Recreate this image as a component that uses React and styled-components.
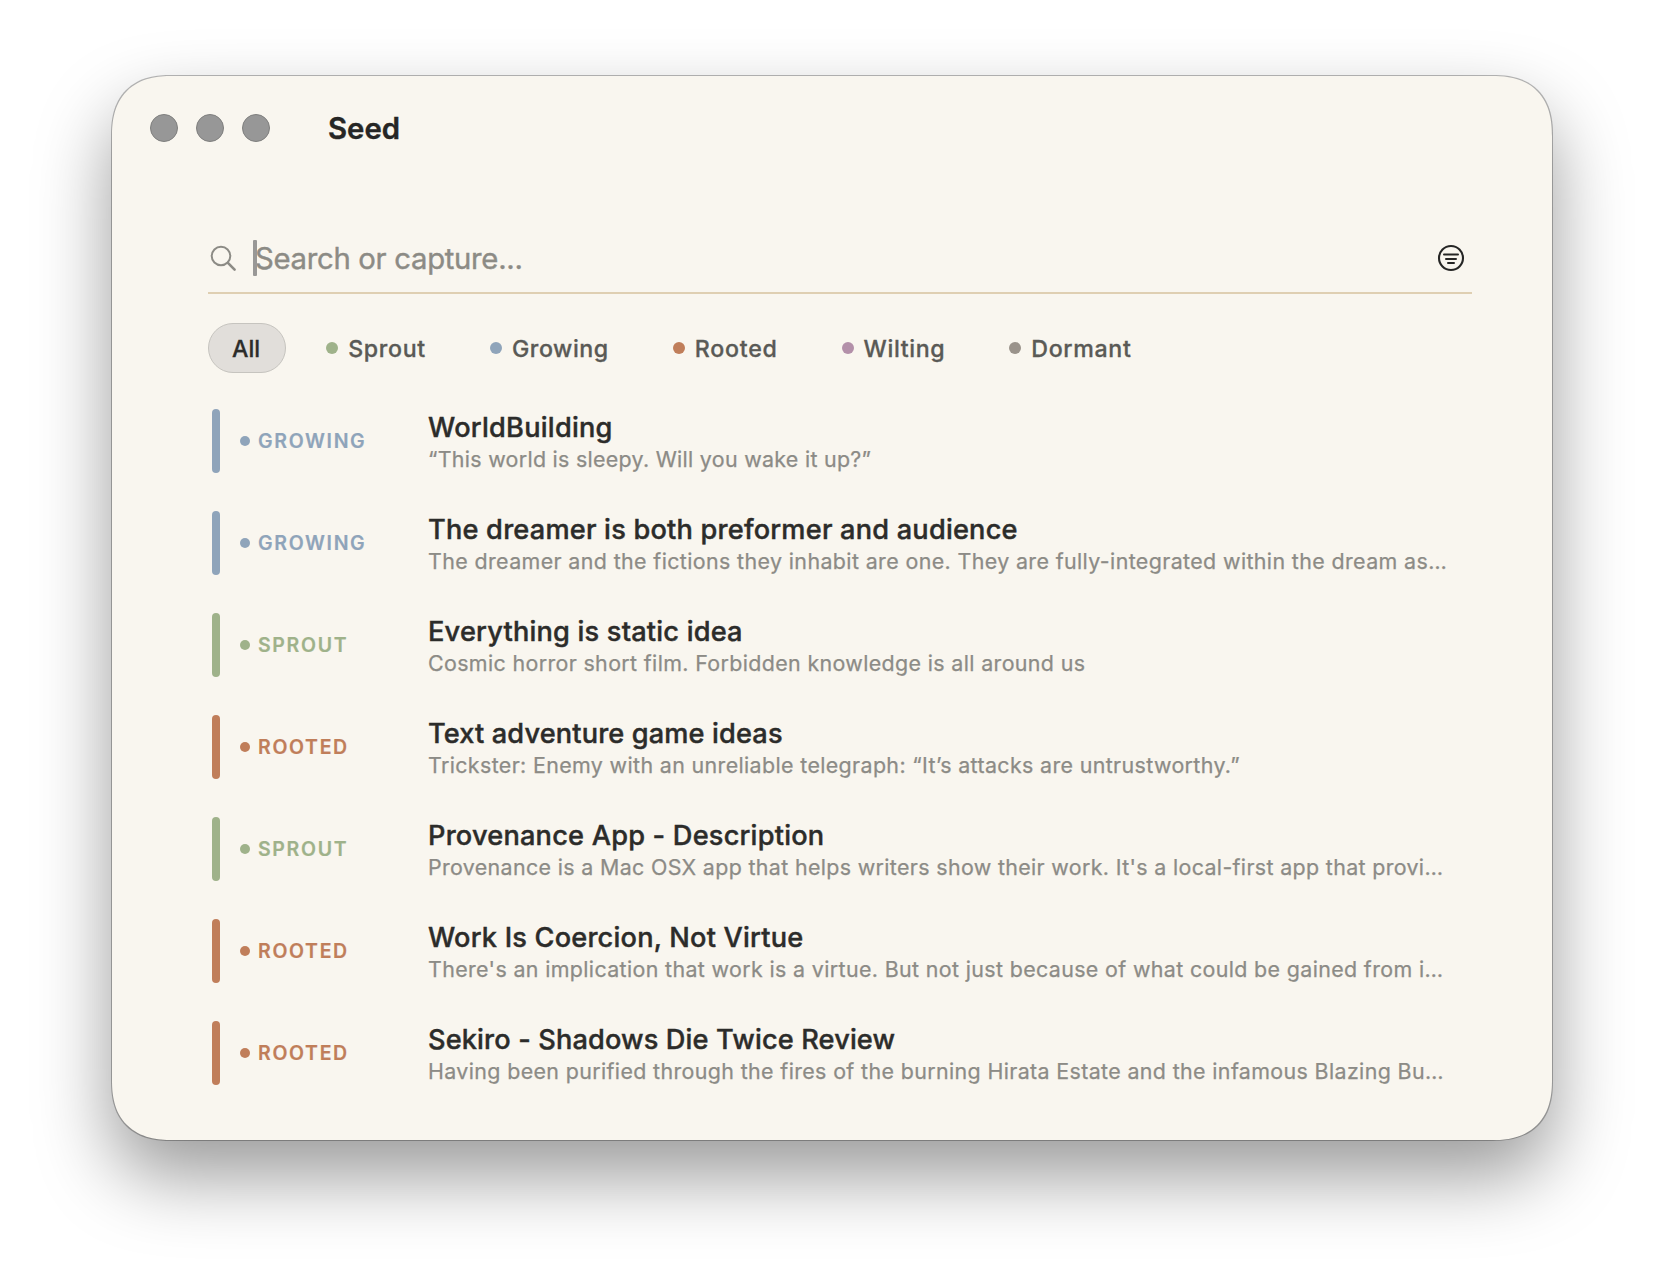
import React from "react";
import styled, { createGlobalStyle } from "styled-components";

const GlobalStyle = createGlobalStyle`
  * { box-sizing: border-box; }
  body {
    margin: 0;
    background: #ffffff;
    font-family: Inter, "Liberation Sans", sans-serif;
    -webkit-font-smoothing: antialiased;
  }
`;

const palette = {
  sprout: "#9fb28a",
  growing: "#8fa4ba",
  rooted: "#c07e5a",
  wilting: "#b390a9",
  dormant: "#9a938b",
};

const Desktop = styled.div`
  width: 1664px;
  height: 1288px;
  padding: 76px 112px;
  overflow: hidden;
`;

const Window = styled.main`
  width: 1440px;
  height: 1064px;
  display: flex;
  flex-direction: column;
  background: #f9f6ef;
  border-radius: 60px;
  corner-shape: superellipse(1.27);
  box-shadow: 0 0 0 1px rgba(0, 0, 0, 0.27), 0 36px 76px rgba(0, 0, 0, 0.4);
`;

const TitleBar = styled.header`
  height: 104px;
  padding-left: 38px;
  display: flex;
  align-items: center;
`;

const Lights = styled.div`
  display: flex;
  gap: 18px;
  margin-right: 58px;
`;

const Light = styled.span`
  width: 28px;
  height: 28px;
  border-radius: 50%;
  background: #979797;
  border: 1px solid #7f7f7e;
`;

const AppTitle = styled.h1`
  margin: 0;
  padding-top: 2px;
  font-size: 29.3px;
  font-weight: 600;
  line-height: 36px;
  -webkit-text-stroke: 0.4px currentColor;
  color: #262625;
`;

const Content = styled.div`
  display: flex;
  flex-direction: column;
  padding: 44px 80px 0 96px;
`;

const SearchRow = styled.div`
  height: 70px;
  display: flex;
  align-items: center;
  border-bottom: 2px solid #dfcfb2;
  padding: 0 7px 0 2px;
`;

const SearchField = styled.div`
  position: relative;
  flex: 1;
  margin-left: 17px;
  padding-top: 1px;
  font-size: 29.3px;
  line-height: 36px;
  letter-spacing: -0.3px;
  -webkit-text-stroke: 0.4px currentColor;
  color: #8c8b85;
`;

const Caret = styled.span`
  position: absolute;
  left: -2px;
  top: 0;
  width: 4px;
  height: 36px;
  border-radius: 1px;
  background: #999896;
`;

const Filters = styled.nav`
  display: flex;
  gap: 16px;
  margin-top: 29px;
`;

const Chip = styled.button`
  height: 50px;
  display: flex;
  align-items: center;
  gap: 10px;
  padding: 2px ${(p) => (p.$active ? "25px 0 23px" : "23px 0")};
  border: 1px solid ${(p) => (p.$active ? "#c6c4bf" : "transparent")};
  border-radius: 25px;
  background: ${(p) => (p.$active ? "#e1deda" : "transparent")};
  color: ${(p) => (p.$active ? "#2c2c2a" : "#5a5a56")};
  font: 500 23.2px/30px Inter, "Liberation Sans", sans-serif;
  letter-spacing: ${(p) => p.$tracking}px;
  -webkit-text-stroke: 0.3px currentColor;
`;

const Dot = styled.span`
  flex: none;
  width: ${(p) => p.$size}px;
  height: ${(p) => p.$size}px;
  margin-top: ${(p) => p.$lift || 0}px;
  border-radius: 50%;
  background: ${(p) => p.$color};
`;

const List = styled.ul`
  list-style: none;
  margin: 17px 0 0;
  padding: 0;
`;

const Row = styled.li`
  height: 102px;
  display: grid;
  grid-template-columns: 8px 208px 1fr;
  align-items: center;
  padding-left: 4px;
`;

const Bar = styled.span`
  height: 64px;
  border-radius: 4px;
  background: ${(p) => p.$color};
`;

const Stage = styled.span`
  display: flex;
  align-items: center;
  gap: 8px;
  padding-left: 20px;
  font-size: 19.5px;
  font-weight: 600;
  line-height: 24px;
  letter-spacing: 1.67px;
  text-transform: uppercase;
  -webkit-text-stroke: 0.2px currentColor;
  color: ${(p) => p.$color};
`;

const Note = styled.div`
  align-self: start;
  padding-top: 21px;
  white-space: nowrap;
`;

const NoteTitle = styled.div`
  font-size: 27.2px;
  font-weight: 500;
  line-height: 34px;
  letter-spacing: ${(p) => p.$tracking}px;
  -webkit-text-stroke: 0.4px currentColor;
  color: #2c2c2a;
`;

const NotePreview = styled.div`
  font-size: 21.4px;
  line-height: 28px;
  letter-spacing: ${(p) => p.$tracking}px;
  -webkit-text-stroke: 0.25px currentColor;
  color: #8c8b86;
`;

const filters = [
  { key: "sprout", label: "Sprout", tracking: 0.68 },
  { key: "growing", label: "Growing", tracking: 0.58 },
  { key: "rooted", label: "Rooted", tracking: 0.74 },
  { key: "wilting", label: "Wilting", tracking: 0.62 },
  { key: "dormant", label: "Dormant", tracking: 0.66 },
];

const notes = [
  { stage: "growing", title: "WorldBuilding", t: 0.23, preview: "“This world is sleepy. Will you wake it up?”", p: 0.3 },
  { stage: "growing", title: "The dreamer is both preformer and audience", t: 0.2, preview: "The dreamer and the fictions they inhabit are one. They are fully-integrated within the dream as…", p: 0.388 },
  { stage: "sprout", title: "Everything is static idea", t: 0.19, preview: "Cosmic horror short film. Forbidden knowledge is all around us", p: 0.365 },
  { stage: "rooted", title: "Text adventure game ideas", t: 0.13, preview: "Trickster: Enemy with an unreliable telegraph: “It’s attacks are untrustworthy.”", p: 0.369 },
  { stage: "sprout", title: "Provenance App - Description", t: 0.2, preview: "Provenance is a Mac OSX app that helps writers show their work. It's a local-first app that provi…", p: 0.352 },
  { stage: "rooted", title: "Work Is Coercion, Not Virtue", t: 0.19, preview: "There's an implication that work is a virtue. But not just because of what could be gained from i…", p: 0.366 },
  { stage: "rooted", title: "Sekiro - Shadows Die Twice Review", t: 0.13, preview: "Having been purified through the fires of the burning Hirata Estate and the infamous Blazing Bu…", p: 0.374 },
];

const SearchIcon = () => (
  <svg width="28" height="28" viewBox="0 0 28 28" fill="none" stroke="#8c8b85" strokeLinecap="round">
    <circle cx="11" cy="12" r="9.3" strokeWidth="2" />
    <path d="M17.9 18.9 24.6 25.6" strokeWidth="2.6" />
  </svg>
);

const FilterIcon = () => (
  <svg width="28" height="28" viewBox="0 0 28 28" fill="none" stroke="#262625" strokeWidth="2" strokeLinecap="round">
    <circle cx="14" cy="14" r="12" strokeWidth="2.1" />
    <path d="M7 10.6h14M9 14.9h10M11 19h6" />
  </svg>
);

export default function App() {
  return (
    <>
      <GlobalStyle />
      <Desktop>
        <Window>
          <TitleBar>
            <Lights>
              <Light />
              <Light />
              <Light />
            </Lights>
            <AppTitle>Seed</AppTitle>
          </TitleBar>
          <Content>
            <SearchRow>
              <SearchIcon />
              <SearchField>
                <Caret />
                Search or capture...
              </SearchField>
              <FilterIcon />
            </SearchRow>
            <Filters>
              <Chip $active $tracking={0}>All</Chip>
              {filters.map((f) => (
                <Chip key={f.key} $tracking={f.tracking}>
                  <Dot $size={12} $lift={-2} $color={palette[f.key]} />
                  {f.label}
                </Chip>
              ))}
            </Filters>
            <List>
              {notes.map((n) => (
                <Row key={n.title}>
                  <Bar $color={palette[n.stage]} />
                  <Stage $color={palette[n.stage]}>
                    <Dot $size={10} $color={palette[n.stage]} />
                    {n.stage}
                  </Stage>
                  <Note>
                    <NoteTitle $tracking={n.t}>{n.title}</NoteTitle>
                    <NotePreview $tracking={n.p}>{n.preview}</NotePreview>
                  </Note>
                </Row>
              ))}
            </List>
          </Content>
        </Window>
      </Desktop>
    </>
  );
}
